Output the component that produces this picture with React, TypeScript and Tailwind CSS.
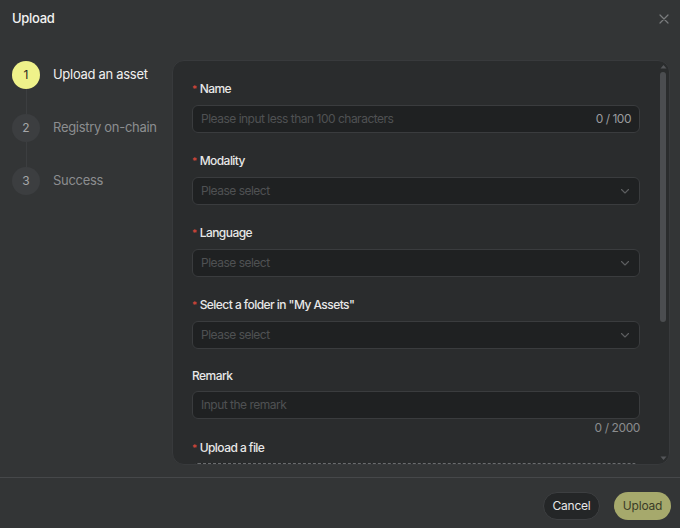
import React from "react";

const Label = ({ text, required = true }: { text: string; required?: boolean }) => (
  <div className="shrink-0 flex items-center h-4 text-[12px] text-[#e8e8e8] font-medium tracking-[-0.55px]">
    {required && <span className="text-[#d9463a] mr-[3px] text-[10px] leading-none">*</span>}
    <span>{text}</span>
  </div>
);

const Chevron = () => (
  <svg width="12" height="12" viewBox="0 0 12 12" fill="none">
    <path d="M2.5 4.5L6 8L9.5 4.5" stroke="#5c5e60" strokeWidth="1.1" strokeLinecap="round" strokeLinejoin="round" />
  </svg>
);

const Select = () => (
  <div className="shrink-0 h-7 rounded-[6px] bg-[#1f2122] border border-[#3a3c3e] flex items-center justify-between pl-2 pr-2 text-[12px] text-[#4f5153] tracking-[-0.5px]">
    <span>Please select</span>
    <Chevron />
  </div>
);

export default function App() {
  return (
    <div
      className="w-[680px] h-[528px] bg-[#333536] flex flex-col overflow-hidden"
      style={{ fontFamily: "Inter, 'Noto Sans', sans-serif" }}
    >
      <div className="shrink-0 h-[38px] flex items-center justify-between pl-3 pr-[10px]">
        <span className="text-[13px] text-[#f2f2f2] font-medium tracking-[-0.3px]">Upload</span>
        <svg width="12" height="12" viewBox="0 0 12 12">
          <path d="M2 2L10 10M10 2L2 10" stroke="#7a7c7e" strokeWidth="1.2" strokeLinecap="round" />
        </svg>
      </div>
      <div className="flex flex-1 min-h-0 pt-[22px] pb-[12px]">
        <div className="w-[172px] pl-3 pt-px shrink-0">
          {[
            { n: "1", t: "Upload an asset", active: true },
            { n: "2", t: "Registry on-chain", active: false },
            { n: "3", t: "Success", active: false },
          ].map((s, i) => (
            <div key={s.n} className="flex flex-col">
              <div className="flex items-center h-7">
                <div
                  className={
                    s.active
                      ? "w-7 h-7 rounded-full bg-[#eff28a] text-[#2a2b22] text-[12px] flex items-center justify-center"
                      : "w-7 h-7 rounded-full bg-[#3c3e40] text-[#a5a7a9] text-[12px] flex items-center justify-center"
                  }
                >
                  {s.n}
                </div>
                <span
                  className={
                    s.active
                      ? "ml-[13px] text-[13px] text-[#f0f0f0] tracking-[-0.3px]"
                      : "ml-[13px] text-[13px] text-[#8c8e90] tracking-[-0.3px]"
                  }
                >
                  {s.t}
                </span>
              </div>
              {i < 2 && <div className="ml-[13.5px] w-px h-[25px] bg-[#3c3e40]" />}
            </div>
          ))}
        </div>
        <div className="w-[498px] h-[405px] rounded-[12px] bg-[#2a2c2d] border border-[#383a3c] flex overflow-hidden relative">
          <div className="flex-1 pl-[19px] pr-[18px] pt-[20px] flex flex-col">
            <Label text="Name" />
            <div className="shrink-0 mt-2 h-7 rounded-[6px] bg-[#1f2122] border border-[#3a3c3e] flex items-center justify-between pl-2 pr-2 text-[12px] tracking-[-0.5px]">
              <span className="text-[#4f5153]">Please input less than 100 characters</span>
              <span className="text-[#9a9c9e]">0 / 100</span>
            </div>
            <div className="shrink-0 mt-5">
              <Label text="Modality" />
            </div>
            <div className="shrink-0 mt-2">
              <Select />
            </div>
            <div className="shrink-0 mt-5">
              <Label text="Language" />
            </div>
            <div className="shrink-0 mt-2">
              <Select />
            </div>
            <div className="shrink-0 mt-5">
              <Label text={'Select a folder in "My Assets"'} />
            </div>
            <div className="shrink-0 mt-2">
              <Select />
            </div>
            <div className="shrink-0 mt-[19px]">
              <Label text="Remark" required={false} />
            </div>
            <div className="shrink-0 mt-[7px] h-7 rounded-[6px] bg-[#1f2122] border border-[#3a3c3e] flex items-center pl-2 text-[12px] text-[#4f5153] tracking-[-0.5px]">
              Input the remark
            </div>
            <div className="shrink-0 text-right text-[12px] text-[#8a8c8e] h-4 mt-[1px] leading-4 tracking-[-0.4px]">0 / 2000</div>
            <div className="shrink-0 mt-[4px]">
              <Label text="Upload a file" />
            </div>
            <div className="shrink-0 mt-[7px] h-[60px] rounded-[6px] border border-dashed border-[#6a6c6e] bg-[#242627]" />
          </div>
          <div className="w-[10px] shrink-0 flex flex-col items-center pt-[3px] pb-[3px] mr-[1px]">
            <svg width="7" height="5" viewBox="0 0 7 5">
              <path d="M0.5 4.5L3.5 1L6.5 4.5Z" fill="#55575a" />
            </svg>
            <div className="w-[6px] h-[250px] rounded-full bg-[#4b4d50] mt-[3px]" />
            <div className="flex-1" />
            <svg width="7" height="5" viewBox="0 0 7 5">
              <path d="M0.5 0.5L3.5 4L6.5 0.5Z" fill="#55575a" />
            </svg>
          </div>
        </div>
      </div>
      <div className="shrink-0 h-[51px] border-t border-[#46484a] flex items-center justify-end gap-[14px] pr-[9px] pt-[5px]">
        <button className="h-7 w-[57px] rounded-full bg-[#242627] border border-[#3d3f41] text-[12px] text-[#e8e8e8] tracking-[-0.2px]">
          Cancel
        </button>
        <button className="h-7 w-[57px] rounded-full bg-[#a6a96c] text-[12px] text-[#3a3c28] tracking-[-0.2px]">
          Upload
        </button>
      </div>
    </div>
  );
}
